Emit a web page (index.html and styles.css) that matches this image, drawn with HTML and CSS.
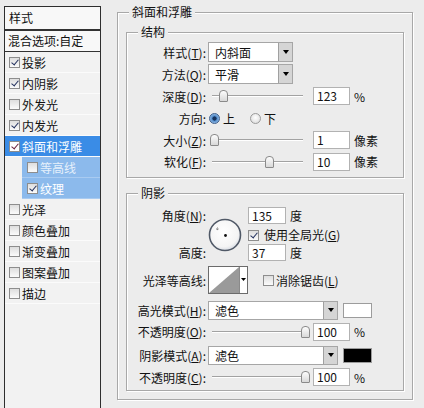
FILE: index.html
```html
<!DOCTYPE html>
<html lang="zh-CN">
<head>
    <meta charset="UTF-8">
    <meta name="viewport" content="width=device-width, initial-scale=1.0">
    <title>图层样式 - 斜面和浮雕</title>
    <link rel="stylesheet" href="styles.css">
</head>
<body>
    <div class="dialog">
        <div class="sidebar">
            <div class="side-head">样式</div>
            <div class="side-blend">混合选项:自定</div>
            <ul class="side-list">
                <li class="item"><span class="check on"></span>投影</li>
                <li class="item"><span class="check on"></span>内阴影</li>
                <li class="item"><span class="check"></span>外发光</li>
                <li class="item"><span class="check on"></span>内发光</li>
                <li class="item active"><span class="check on"></span>斜面和浮雕</li>
                <li class="item sub dim"><span class="check"></span>等高线</li>
                <li class="item sub"><span class="check on"></span>纹理</li>
                <li class="item"><span class="check"></span>光泽</li>
                <li class="item"><span class="check"></span>颜色叠加</li>
                <li class="item"><span class="check"></span>渐变叠加</li>
                <li class="item"><span class="check"></span>图案叠加</li>
                <li class="item"><span class="check"></span>描边</li>
            </ul>
        </div>

        <div class="main">
            <fieldset class="group outer">
                <legend>斜面和浮雕</legend>

                <fieldset class="group struct">
                    <legend>结构</legend>
                    <div class="row">
                        <span class="lbl">样式(<u>T</u>):</span>
                        <div class="select short"><span>内斜面</span><i class="arrow"></i></div>
                    </div>
                    <div class="row">
                        <span class="lbl">方法(<u>Q</u>):</span>
                        <div class="select short"><span>平滑</span><i class="arrow"></i></div>
                    </div>
                    <div class="row">
                        <span class="lbl">深度(<u>D</u>):</span>
                        <div class="slider"><i class="track"></i><i class="thumb" style="left: 11px"></i></div>
                        <span class="num">123</span><span class="unit">%</span>
                    </div>
                    <div class="row">
                        <span class="lbl">方向:</span>
                        <span class="radio on"></span><span class="radio-text">上</span>
                        <span class="radio second"></span><span class="radio-text">下</span>
                    </div>
                    <div class="row">
                        <span class="lbl">大小(<u>Z</u>):</span>
                        <div class="slider"><i class="track"></i><i class="thumb" style="left: 2px"></i></div>
                        <span class="num">1</span><span class="unit">像素</span>
                    </div>
                    <div class="row last">
                        <span class="lbl">软化(<u>F</u>):</span>
                        <div class="slider"><i class="track"></i><i class="thumb" style="left: 57px"></i></div>
                        <span class="num">10</span><span class="unit">像素</span>
                    </div>
                </fieldset>

                <fieldset class="group shade">
                    <legend>阴影</legend>
                    <div class="angle-grid">
                        <span class="lbl angle-lbl">角度(<u>N</u>):</span>
                        <div class="dial">
                            <svg width="34" height="34" viewBox="0 0 34 34">
                                <defs>
                                    <radialGradient id="dialFill" cx="45%" cy="40%" r="60%">
                                        <stop offset="0" stop-color="#ffffff"/>
                                        <stop offset="0.8" stop-color="#f4f4f4"/>
                                        <stop offset="1" stop-color="#d9dde4"/>
                                    </radialGradient>
                                </defs>
                                <circle cx="17" cy="17" r="15.5" fill="url(#dialFill)" stroke="#4f5866" stroke-width="1.6"/>
                                <path d="M9.5 9.5v3M8 11h3" stroke="#777" stroke-width="0.9" stroke-dasharray="1 0.6"/>
                                <circle cx="17.5" cy="17.5" r="1.4" fill="#111"/>
                            </svg>
                        </div>
                        <div class="cell angle-val"><span class="num small">135</span><span class="unit">度</span></div>
                        <div class="cell global"><span class="check on"></span><span class="check-text">使用全局光(<u>G</u>)</span></div>
                        <span class="lbl height-lbl">高度:</span>
                        <div class="cell height-val"><span class="num small">37</span><span class="unit">度</span></div>
                    </div>

                    <div class="row contour-row">
                        <span class="lbl">光泽等高线:</span>
                        <div class="contour">
                            <svg width="40" height="28" viewBox="0 0 40 28">
                                <rect x="0.5" y="0.5" width="39" height="27" fill="#fff" stroke="#6b6b6b"/>
                                <path d="M1 27 L31 1 L31 27 Z" fill="#9a9a9a"/>
                                <path d="M31.5 1 V27" stroke="#8a8a8a"/>
                                <path d="M33 12 h5 l-2.5 3 z" fill="#000"/>
                            </svg>
                        </div>
                        <span class="check aa"></span><span class="check-text">消除锯齿(<u>L</u>)</span>
                    </div>

                    <div class="row mode-row">
                        <span class="lbl">高光模式(<u>H</u>):</span>
                        <div class="select long"><span>滤色</span><i class="arrow"></i></div>
                        <span class="swatch white"></span>
                    </div>
                    <div class="row opac-row">
                        <span class="lbl">不透明度(<u>O</u>):</span>
                        <div class="slider"><i class="track"></i><i class="thumb" style="left: 93px"></i></div>
                        <span class="num">100</span><span class="unit">%</span>
                    </div>
                    <div class="row mode-row second-mode">
                        <span class="lbl">阴影模式(<u>A</u>):</span>
                        <div class="select long"><span>滤色</span><i class="arrow"></i></div>
                        <span class="swatch black"></span>
                    </div>
                    <div class="row">
                        <span class="lbl">不透明度(<u>C</u>):</span>
                        <div class="slider"><i class="track"></i><i class="thumb" style="left: 93px"></i></div>
                        <span class="num">100</span><span class="unit">%</span>
                    </div>
                </fieldset>
            </fieldset>
        </div>
    </div>
</body>
</html>
```

FILE: styles.css
```css
* {
    box-sizing: border-box;
}

body {
    margin: 0;
    width: 424px;
    height: 408px;
    overflow: hidden;
    background: #ececec;
    font-family: "Noto Sans CJK SC", "Noto Sans", sans-serif;
    font-size: 12px;
    color: #111;
}

.dialog {
    display: flex;
    align-items: flex-start;
}

/* left list */
.sidebar {
    flex: none;
    width: 97px;
    height: 410px;
    margin: 6px 0 0 4px;
    border: 1px solid #2e2e2e;
    background: #f2f2f2;
}

.side-head {
    height: 24px;
    line-height: 22px;
    padding-left: 4px;
    border-bottom: 2px solid #333;
    background: #f8f8f8;
}

.side-blend {
    height: 21px;
    line-height: 20px;
    padding-left: 3px;
    border-bottom: 1px solid #333;
    background: #f8f8f8;
}

.side-list {
    list-style: none;
    margin: 0;
    padding: 0;
}

.item {
    display: flex;
    align-items: center;
    height: 21px;
    padding-left: 4px;
    border-bottom: 1px solid #fbfbfb;
    border-top: 0;
    white-space: nowrap;
}

.item .check {
    margin-right: 2px;
}

.item.active {
    background: #3a8ce6;
    color: #fff;
}

.item.sub {
    margin-left: 17px;
    padding-left: 5px;
    background: #8cbaec;
    color: #fff;
    border-bottom-color: #a9cbf1;
}

.item.dim {
    color: #e6f0fb;
}

.check {
    position: relative;
    flex: none;
    width: 11px;
    height: 11px;
    border: 1px solid #8d8d8d;
    background: linear-gradient(#dedede, #fbfbfb);
}

.check.on::after {
    content: "";
    position: absolute;
    left: 3px;
    top: 0;
    width: 3px;
    height: 6px;
    border: solid #22305e;
    border-width: 0 1.5px 1.5px 0;
    transform: rotate(40deg);
}

.item.active .check {
    background: #fff;
}

.item.active .check.on::after {
    border-color: #6a1f3c;
}

/* right panel */
.main {
    margin: 5px 0 0 16px;
}

.group {
    margin: 0;
    padding: 0;
    border: 1px solid #a8a8a8;
    box-shadow: inset 1px 1px 0 #fff, 1px 1px 0 #fff;
}

.group legend {
    padding: 0 3px;
    line-height: 14px;
    background: #ececec;
}

.outer {
    width: 296px;
    padding: 6px 0 8px;
}

.outer > legend {
    margin-left: 11px;
}

.struct,
.shade {
    margin: 0 8px;
}

.struct {
    padding: 2px 0 5px;
}

.shade {
    margin-top: 8px;
    padding: 5px 0 2px;
}

.struct legend,
.shade legend {
    margin-left: 11px;
}

.row {
    display: flex;
    align-items: center;
    height: 22px;
    white-space: nowrap;
}

.row.last {
    height: 21px;
}

.lbl {
    flex: none;
    width: 79px;
    margin-right: 2px;
    text-align: right;
    white-space: nowrap;
}

u {
    text-underline-offset: 1px;
}

.select {
    flex: none;
    display: flex;
    align-items: center;
    height: 20px;
    padding-left: 6px;
    border: 1px solid #a6a6a6;
    background: #fff;
}

.select.short {
    width: 85px;
}

.select.long {
    width: 130px;
    height: 19px;
}

.arrow {
    display: flex;
    align-items: center;
    justify-content: center;
    width: 14px;
    height: 100%;
    margin-left: auto;
    background: #d5d5d5;
    border-left: 1px solid #a0a0a0;
}

.arrow::after {
    content: "";
    border-left: 3.5px solid transparent;
    border-right: 3.5px solid transparent;
    border-top: 4px solid #000;
}

.slider {
    position: relative;
    flex: none;
    width: 105px;
    height: 14px;
}

.track {
    position: absolute;
    left: 4px;
    right: 10px;
    top: 6px;
    height: 2px;
    border-top: 1px solid #a2a2a2;
    border-bottom: 1px solid #fff;
}

.thumb {
    position: absolute;
    top: 1px;
    width: 9px;
    height: 12px;
    border: 1px solid #8a8a8a;
    border-radius: 4px 4px 1px 1px;
    background: linear-gradient(#fdfdfd, #d8d8d8);
}

.num {
    flex: none;
    width: 37px;
    height: 18px;
    padding-left: 3px;
    line-height: 16px;
    border: 1px solid #b2b2b2;
    background: #fff;
}

.num.small {
    width: 38px;
    height: 17px;
    line-height: 15px;
}

.unit {
    margin-left: 4px;
}

.radio {
    flex: none;
    width: 11px;
    height: 11px;
    margin-left: 1px;
    border-radius: 50%;
    border: 1px solid #9a9a9a;
    background: radial-gradient(circle at 50% 40%, #ffffff, #d6d6d6);
}

.radio.on {
    border-color: #3d5f8c;
    background: radial-gradient(circle, #17335c 0 1.8px, #4f8acb 2.4px, #bcd8f3 100%);
}

.radio.second {
    margin-left: 15px;
}

.radio-text {
    margin-left: 3px;
}

/* angle / altitude */
.angle-grid {
    display: grid;
    grid-template-columns: 81px 40px 1fr;
    grid-template-rows: 20px 18px 18px;
    align-items: center;
}

.angle-grid .lbl {
    margin-right: 2px;
}

.angle-lbl {
    grid-column: 1;
    grid-row: 1;
}

.height-lbl {
    grid-column: 1;
    grid-row: 3;
}

.dial {
    grid-column: 2;
    grid-row: 1 / 4;
    display: flex;
    margin-top: 3px;
}

.cell {
    display: flex;
    align-items: center;
    white-space: nowrap;
}

.angle-val {
    grid-column: 3;
    grid-row: 1;
}

.global {
    grid-column: 3;
    grid-row: 2;
}

.height-val {
    grid-column: 3;
    grid-row: 3;
}

.check-text {
    margin-left: 5px;
}

.global .check {
    margin-top: 3px;
}

.contour-row {
    height: 32px;
    margin-top: 3px;
}

.contour {
    display: flex;
    flex: none;
}

.check.aa {
    margin-left: 15px;
}

.contour-row .check-text {
    margin-left: 2px;
}

.mode-row {
    margin-top: 3px;
}

.mode-row.second-mode {
    margin-top: 2px;
}

.opac-row {
    height: 21px;
}

.swatch {
    flex: none;
    width: 29px;
    height: 15px;
    margin-left: 5px;
    border: 1px solid #9c9c9c;
}

.swatch.white {
    background: #fff;
}

.swatch.black {
    background: #000;
}
```
